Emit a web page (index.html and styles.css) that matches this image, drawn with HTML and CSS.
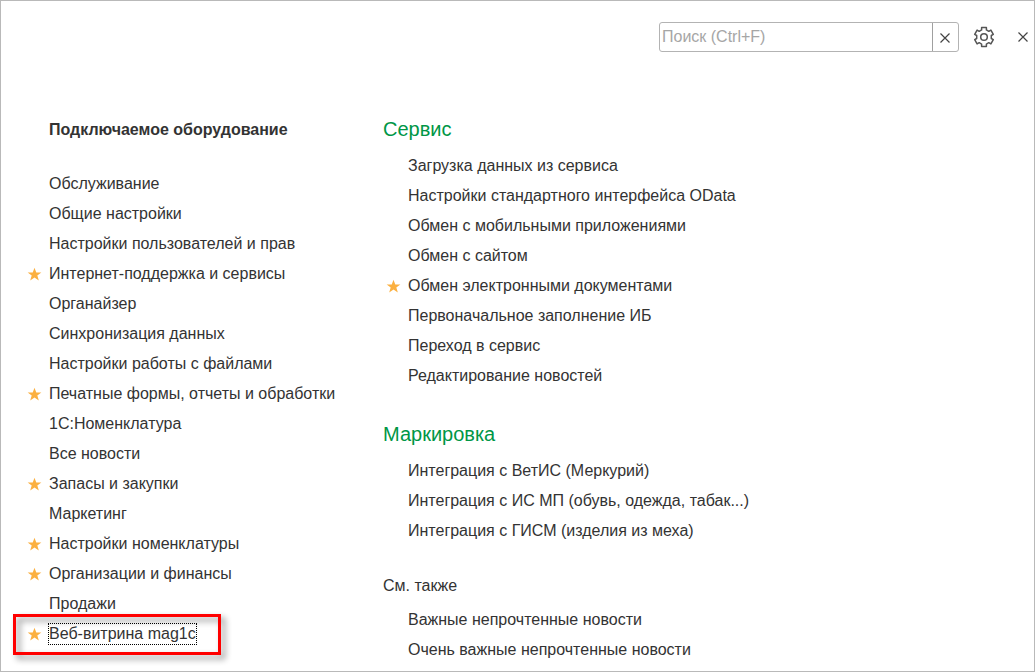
FILE: index.html
```html
<!DOCTYPE html>
<html lang="ru">
<head>
<meta charset="utf-8">
<title>Меню раздела</title>
<link rel="stylesheet" href="styles.css">
</head>
<body>
<svg class="sprite" aria-hidden="true">
  <symbol id="star" viewBox="0 0 16 16"><path d="M8 .8l1.9 5h5.400l-4.300 3.300 1.600 5.400L8 11.300l-4.600 3.200L5 9.100.7 5.800h5.400z"/></symbol>
  <symbol id="cross" viewBox="0 0 12 12"><path d="M1.500 1.500l9 9M10.500 1.500l-9 9"/></symbol>
</svg>
<div class="panel">
  <header class="toolbar">
    <form class="search" role="search">
      <input class="search-input" type="text" placeholder="Поиск (Ctrl+F)" aria-label="Поиск">
      <button class="search-clear" type="button" aria-label="Очистить"><svg class="cross"><use href="#cross"/></svg></button>
    </form>
    <button class="tool settings" type="button" aria-label="Настройки">
      <svg class="gear" viewBox="0 0 22 22"><path d="M8.600 1.500h4.800v2.400l2.400 1.400 2.100-1.200 2.400 4.200-2 1.200v3l2 1.200-2.400 4.200-2.100-1.200-2.400 1.400v2.400H8.600v-2.400l-2.400-1.400-2.100 1.200-2.400-4.200 2-1.200v-3l-2-1.200 2.400-4.200 2.100 1.200 2.400-1.400z"/><circle cx="11" cy="11" r="3.300"/></svg>
    </button>
    <button class="tool close" type="button" aria-label="Закрыть"><svg class="cross"><use href="#cross"/></svg></button>
  </header>
  <main class="columns">
    <nav class="column">
      <h2 class="title title-bold">Подключаемое оборудование</h2>
      <ul class="list">
        <li class="item"><a href="#">Обслуживание</a></li>
        <li class="item"><a href="#">Общие настройки</a></li>
        <li class="item"><a href="#">Настройки пользователей и прав</a></li>
        <li class="item"><svg class="star"><use href="#star"/></svg><a href="#">Интернет-поддержка и сервисы</a></li>
        <li class="item"><a href="#">Органайзер</a></li>
        <li class="item"><a href="#">Синхронизация данных</a></li>
        <li class="item"><a href="#">Настройки работы с файлами</a></li>
        <li class="item"><svg class="star"><use href="#star"/></svg><a href="#">Печатные формы, отчеты и обработки</a></li>
        <li class="item"><a href="#">1С:Номенклатура</a></li>
        <li class="item"><a href="#">Все новости</a></li>
        <li class="item"><svg class="star"><use href="#star"/></svg><a href="#">Запасы и закупки</a></li>
        <li class="item"><a href="#">Маркетинг</a></li>
        <li class="item"><svg class="star"><use href="#star"/></svg><a href="#">Настройки номенклатуры</a></li>
        <li class="item"><svg class="star"><use href="#star"/></svg><a href="#">Организации и финансы</a></li>
        <li class="item"><a href="#">Продажи</a></li>
        <li class="item marked"><svg class="star"><use href="#star"/></svg><a class="focused" href="#">Веб-витрина mag1c</a></li>
      </ul>
    </nav>
    <nav class="column">
      <section class="group">
        <h2 class="title title-green">Сервис</h2>
        <ul class="list">
          <li class="item"><a href="#">Загрузка данных из сервиса</a></li>
          <li class="item"><a href="#">Настройки стандартного интерфейса OData</a></li>
          <li class="item"><a href="#">Обмен с мобильными приложениями</a></li>
          <li class="item"><a href="#">Обмен с сайтом</a></li>
          <li class="item"><svg class="star"><use href="#star"/></svg><a href="#">Обмен электронными документами</a></li>
          <li class="item"><a href="#">Первоначальное заполнение ИБ</a></li>
          <li class="item"><a href="#">Переход в сервис</a></li>
          <li class="item"><a href="#">Редактирование новостей</a></li>
        </ul>
      </section>
      <section class="group">
        <h2 class="title title-green">Маркировка</h2>
        <ul class="list">
          <li class="item"><a href="#">Интеграция с ВетИС (Меркурий)</a></li>
          <li class="item"><a href="#">Интеграция с ИС МП (обувь, одежда, табак...)</a></li>
          <li class="item"><a href="#">Интеграция с ГИСМ (изделия из меха)</a></li>
        </ul>
      </section>
      <section class="group">
        <h2 class="title title-plain">См. также</h2>
        <ul class="list">
          <li class="item"><a href="#">Важные непрочтенные новости</a></li>
          <li class="item"><a href="#">Очень важные непрочтенные новости</a></li>
        </ul>
      </section>
    </nav>
  </main>
</div>
</body>
</html>
```
FILE: styles.css
```css
*, *::after { box-sizing: border-box; }

body {
  margin: 0;
  background: #fff;
  color: #333;
  font: 16px/30px "Liberation Sans", Arial, sans-serif;
}

.sprite { display: none; }

.panel {
  min-height: 100vh;
  border: 1px solid #b9b9b9;
}

.toolbar {
  display: flex;
  justify-content: flex-end;
  align-items: center;
  padding-top: 21px;
}

.search {
  display: flex;
  width: 300px;
  height: 30px;
  border: 1px solid #b3b3b3;
  border-radius: 3px;
}

.search-input {
  flex: 1;
  min-width: 0;
  padding: 0 2px;
  border: 0;
  outline: 0;
  background: none;
  color: #333;
  font: inherit;
}

.search-input::placeholder { color: #a6a6a6; }

button {
  display: flex;
  align-items: center;
  justify-content: center;
  height: 30px;
  padding: 0;
  border: 0;
  background: none;
}

.search-clear {
  width: 26px;
  height: 28px;
  padding: 2px 2px 0 0;
  border-left: 1px solid #a0a0a0;
}

.cross {
  width: 12px;
  height: 12px;
  fill: none;
  stroke: #444;
  stroke-width: 1.2;
}

.settings { width: 30px; margin-left: 10px; }
.close { width: 22px; margin-left: 13px; }

.gear {
  width: 22px;
  height: 22px;
  fill: none;
  stroke: #555;
  stroke-width: 1.5;
  stroke-linejoin: round;
}

.columns {
  display: grid;
  grid-template-columns: 356px 1fr;
  padding: 63px 0 0 26px;
}

.title {
  margin: 0;
  font-size: 16px;
  font-weight: 400;
}

.title-bold {
  margin-bottom: 24px;
  padding-left: 22px;
  font-weight: 700;
}

.title-green {
  margin-bottom: 8px;
  color: #009646;
  font-size: 20px;
  line-height: 28px;
}

.title-plain {
  margin-bottom: 8px;
  line-height: 22px;
}

.group { margin-bottom: 29px; }
.group:last-child { margin-bottom: 0; }
.group .list { padding-left: 3px; }

.list {
  margin: 0;
  padding: 0;
  list-style: none;
}

.item {
  display: grid;
  grid-template-columns: 22px auto;
  justify-content: start;
  align-items: center;
  height: 30px;
}

.item a {
  grid-column: 2;
  color: inherit;
  text-decoration: none;
}

.star {
  width: 15px;
  height: 15px;
  fill: #fbb040;
}

.item .focused {
  line-height: 20px;
  outline: 1px dotted #000;
}

.marked { position: relative; }

/* Red frame around the highlighted command */
.marked::after {
  content: "";
  position: absolute;
  top: -5px;
  left: -14px;
  width: 208px;
  height: 41px;
  border: 3px solid #f00;
  filter: drop-shadow(4px 4px 3px rgba(0, 0, 0, 0.45));
  pointer-events: none;
}
```
